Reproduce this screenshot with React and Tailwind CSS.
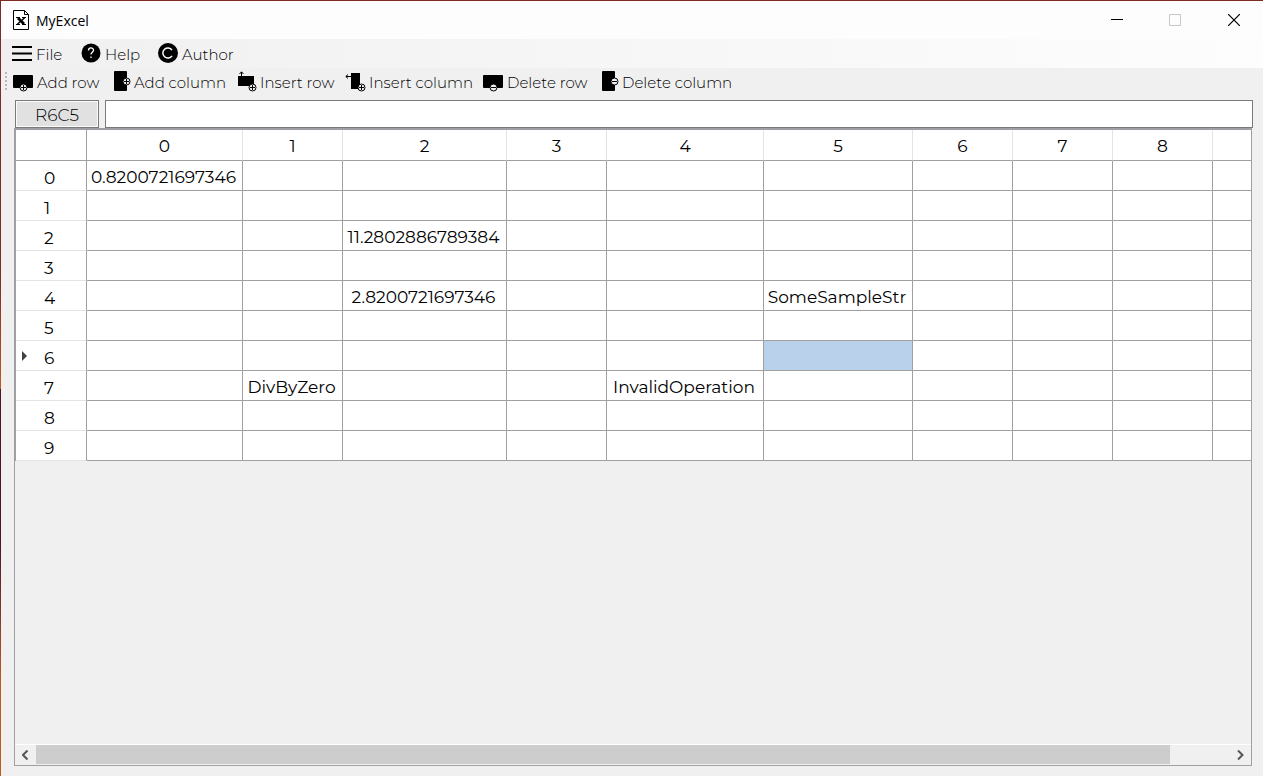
import React from "react";

const columns = ["0", "1", "2", "3", "4", "5", "6", "7", "8", ""];
const rows = [0, 1, 2, 3, 4, 5, 6, 7, 8, 9];
const columnWidths = [
  "w-[71px]", "w-[156px]", "w-[100px]", "w-[164px]", "w-[100px]", "w-[157px]",
  "w-[149px]", "w-[100px]", "w-[100px]", "w-[100px]", "w-[100px]",
];
const cells = {
  "0-0": "0.8200721697346",
  "2-2": "11.2802886789384",
  "4-2": "2.8200721697346",
  "4-5": "SomeSampleStr",
  "7-1": "DivByZero",
  "7-4": "InvalidOperation",
};

function Badge({ cx, cy, plus }) {
  return (
    <g>
      <circle cx={cx} cy={cy} r="3.5" fill="#f0f0f0" stroke="#000" />
      <path d={`M${cx - 2.5} ${cy}h5${plus ? `M${cx} ${cy - 2.5}v5` : ""}`} stroke="#000" />
    </g>
  );
}

function RowIcon({ plus }) {
  return (
    <svg width="20" height="20" viewBox="0 0 20 20" fill="none" overflow="visible" aria-hidden="true">
      <rect y="4" width="20" height="13" rx="1" fill="#000" />
      <Badge cx={10.5} cy={16.5} plus={plus} />
    </svg>
  );
}

function ColumnIcon({ plus }) {
  return (
    <svg width="20" height="20" viewBox="0 0 20 20" fill="none" overflow="visible" aria-hidden="true">
      <rect x="4" width="13" height="20" rx="1" fill="#000" />
      <Badge cx={16.5} cy={10.5} plus={plus} />
    </svg>
  );
}

function InsertRowIcon() {
  return (
    <svg width="20" height="20" viewBox="0 0 20 20" fill="none" overflow="visible" aria-hidden="true">
      <path d="M5.5 6V1M3.5 3l2-2.2 2 2.2" stroke="#000" />
      <rect x="2" y="5" width="16" height="10" fill="#000" />
      <Badge cx={16.5} cy={16.5} plus />
    </svg>
  );
}

function InsertColumnIcon() {
  return (
    <svg width="20" height="20" viewBox="0 0 20 20" fill="none" overflow="visible" aria-hidden="true">
      <path d="M6 5.5H1M3 3.5L.8 5.5 3 7.5" stroke="#000" />
      <rect x="6" y="2" width="9" height="16" fill="#000" />
      <Badge cx={16.5} cy={16.5} plus />
    </svg>
  );
}

const tools = [
  ["Add row", <RowIcon plus />, "w-[97px]"],
  ["Add column", <ColumnIcon plus />, "w-[126px]"],
  ["Insert row", <InsertRowIcon />, "w-[109px]"],
  ["Insert column", <InsertColumnIcon />, "w-[138px]"],
  ["Delete row", <RowIcon />, "w-[115px]"],
  ["Delete column", <ColumnIcon />, "w-[140px]"],
];

export default function App() {
  return (
    <div className="flex h-screen flex-col overflow-hidden border-t border-[#7f2a22] bg-[#f0f0f0] font-['Montserrat','Inter',sans-serif] text-[15px] leading-5 font-light text-black">
      <div className="flex min-h-0 flex-1">
        <div className="flex w-px shrink-0 flex-col">
          <div className="flex-1 bg-linear-to-b from-[#7f2a22] from-70% to-[#c05a18]" />
          <div className="flex-1 bg-linear-to-b from-[#501428] from-40% to-[#c05a18] to-75%" />
        </div>
        <div className="flex min-w-0 flex-1 flex-col">
          <header className="flex h-[38px] shrink-0 items-center bg-[#fdfdfd] pl-3">
            <svg width="16" height="20" viewBox="0 0 16 20" fill="none" aria-hidden="true">
              <path d="M.5.5h11l4 4v15H.5z" fill="#fff" stroke="#000" />
              <path d="M11.5.5v4h4" stroke="#000" />
              <path d="M3 7.5h4M9 7.5h4M3 14.5h4M9 14.5h4" stroke="#000" />
              <path d="M11.5 8L4.5 14" stroke="#000" strokeWidth="1.5" />
              <path d="M5 8l6 6" stroke="#000" strokeWidth="2.8" />
            </svg>
            <h1 className="ml-[7px] flex-1 pt-0.5 font-['Segoe_UI','Open_Sans',sans-serif] text-sm font-normal">MyExcel</h1>
            <div className="flex">
              <button aria-label="Minimize" className="flex w-[58px] justify-center">
                <svg width="12" height="12" viewBox="0 0 12 12"><path d="M0 5.5h12" stroke="#000" /></svg>
              </button>
              <button aria-label="Maximize" disabled className="flex w-[58px] justify-center">
                <svg width="12" height="12" viewBox="0 0 12 12"><path d="M.5.5h11v11H.5z" fill="none" stroke="#c8c8c8" /></svg>
              </button>
              <button aria-label="Close" className="flex w-[59px] justify-center">
                <svg width="12" height="12" viewBox="0 0 12 12"><path d="M0 0l12 12M12 0L0 12" stroke="#000" strokeWidth="1.2" /></svg>
              </button>
            </div>
          </header>

          <nav className="flex h-[29px] shrink-0 items-center bg-linear-to-r from-[#f0f0f0] to-[#fdfdfd] pb-px pl-[11px]">
            <button className="flex w-[69px] items-center gap-1">
              <svg width="20" height="20" viewBox="0 0 20 20" aria-hidden="true"><path d="M0 4h20M0 10.5h20M0 17h20" stroke="#000" strokeWidth="2" /></svg>
              <span className="pt-1">File</span>
            </button>
            <button className="flex w-[77px] items-center gap-1">
              <svg width="20" height="20" viewBox="0 0 20 20" fill="none" aria-hidden="true">
                <circle cx="10" cy="10" r="9.5" fill="#000" />
                <path d="M7.5 7.5C7.5 4 12.5 4.2 12.5 7.2c0 2-2.5 2-2.5 4.3M10 13.5v1.5" stroke="#fff" strokeWidth="1.3" />
              </svg>
              <span className="pt-1">Help</span>
            </button>
            <button className="flex items-center gap-1">
              <svg width="20" height="20" viewBox="0 0 20 20" fill="none" aria-hidden="true">
                <circle cx="10" cy="10" r="10" fill="#000" />
                <path d="M14 7.2a5 5 0 1 0 0 5.6" stroke="#fff" strokeWidth="1.5" />
              </svg>
              <span className="pt-1">Author</span>
            </button>
          </nav>

          <div role="toolbar" aria-label="Rows and columns" className="flex h-[29px] shrink-0 items-center pb-[3px] pl-1">
            <svg width="8" height="20" viewBox="0 0 8 20" aria-hidden="true">
              <path d="M1 1v20" stroke="#b8b8b8" strokeWidth="2" strokeDasharray="2 2" />
            </svg>
            {tools.map(([label, icon, width]) => (
              <button key={label} className={`flex shrink-0 items-center gap-1 whitespace-nowrap ${width}`}>
                {icon}
                <span className="pt-1">{label}</span>
              </button>
            ))}
          </div>

          <main className="flex min-h-0 flex-1 flex-col pt-[3px] pr-[10px] pb-[10px] pl-[13px]">
            <div className="flex h-7 shrink-0 gap-[6px] pl-px text-[17px]">
              <button className="w-[84px] border border-[#7a7a7a] bg-[#e1e1e1] pt-0.5 outline-1 -outline-offset-2 outline-[#fbfbfb]">R6C5</button>
              <input aria-label="Cell expression" className="min-w-0 flex-1 border border-[#7a7a7a] bg-white px-1 outline-none" />
            </div>
            <section className="mr-px flex min-h-0 flex-1 flex-col border border-t-2 border-[#a0a0a4] bg-[#f0f0f0]">
              <div className="min-h-0 flex-1 overflow-hidden">
                <table className="w-[1297px] table-fixed border-separate border-spacing-0 border-l border-[#a0a0a4] text-center text-[17px] leading-4 font-normal">
                  <colgroup>
                    {columnWidths.map((width, i) => <col key={i} className={width} />)}
                  </colgroup>
                  <thead>
                    <tr className="h-[31px] bg-white">
                      <td className="border-r border-b border-[#a0a0a0] p-0" />
                      {columns.map((name, i) => (
                        <th key={i} scope="col" className="border-r border-b border-r-[#e3e3e3] border-b-[#a0a0a0] p-0 pt-px font-normal">{name}</th>
                      ))}
                    </tr>
                  </thead>
                  <tbody>
                    {rows.map((row) => (
                      <tr key={row} className="h-[30px] bg-white">
                        <th scope="row" className="border-r border-b border-r-[#a0a0a0] border-b-[#e3e3e3] p-0 font-normal">
                          <div className="flex items-center pl-[6px]">
                            <svg width="5" height="10" viewBox="0 0 5 10" className={row === 6 ? "" : "invisible"} aria-hidden="true">
                              <path d="M0 0l5 5-5 5z" fill="#404040" />
                            </svg>
                            <span className="ml-[17px] pt-1">{row}</span>
                          </div>
                        </th>
                        {columns.map((_, col) => (
                          <td key={col} className={`border-r border-b border-[#a0a0a0] p-0 pt-[3px] pr-0.5 whitespace-nowrap ${row === 6 && col === 5 ? "bg-[#b9d1ea]" : ""}`}>
                            {cells[`${row}-${col}`]}
                          </td>
                        ))}
                      </tr>
                    ))}
                  </tbody>
                </table>
              </div>
              <div className="flex h-[21px] shrink-0 border-t border-white">
                <button aria-label="Scroll left" className="flex w-[21px] items-center justify-center">
                  <svg width="7" height="10" viewBox="0 0 7 10" fill="none"><path d="M5.5 .5L1 5 5.5 9.5" stroke="#555" strokeWidth="2" /></svg>
                </button>
                <div className="flex min-w-0 flex-1 pb-px">
                  <div className="w-[95%] bg-[#cdcdcd]" />
                </div>
                <button aria-label="Scroll right" className="flex w-[21px] items-center justify-center">
                  <svg width="7" height="10" viewBox="0 0 7 10" fill="none"><path d="M1 .5L5.5 5 1 9.5" stroke="#555" strokeWidth="2" /></svg>
                </button>
              </div>
            </section>
          </main>
        </div>
      </div>
    </div>
  );
}
